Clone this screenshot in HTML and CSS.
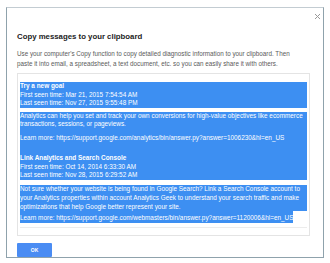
FILE: index.html
```html
<!DOCTYPE html>
<html lang="en">
<head>
    <meta charset="UTF-8">
    <title>Copy messages to your clipboard</title>
    <link rel="stylesheet" href="styles.css">
</head>
<body>
    <div class="dialog">
        <div class="close-row">
            <svg class="close" width="7" height="7" viewBox="0 0 7 7">
                <path d="M1 1 L6 6 M6 1 L1 6" stroke="#9a9a9a" stroke-width="1" fill="none"/>
            </svg>
        </div>
        <h1>Copy messages to your clipboard</h1>
        <p class="desc">Use your computer's Copy function to copy detailed diagnostic information to your clipboard. Then paste it into email, a spreadsheet, a text document, etc. so you can easily share it with others.</p>

        <div class="messages">
            <div class="sel block-1">
                <strong>Try a new goal</strong><br>
                First seen time: Mar 21, 2015 7:54:54 AM<br>
                Last seen time: Nov 27, 2015 9:55:48 PM
            </div>
            <div class="sel block-2">
                <div>Analytics can help you set and track your own conversions for high-value objectives like ecommerce transactions, sessions, or pageviews.</div>
                <div class="learn">Learn more: https://support.google.com/analytics/bin/answer.py?answer=1006230&amp;hl=en_US</div>
                <div class="next-head">
                    <strong>Link Analytics and Search Console</strong><br>
                    First seen time: Oct 14, 2014 6:33:30 AM<br>
                    Last seen time: Nov 28, 2015 6:29:52 AM
                </div>
            </div>
            <div class="sel block-3">Not sure whether your website is being found in Google Search? Link a Search Console account to your Analytics properties within account Analytics Geek to understand your search traffic and make optimizations that help Google better represent your site.</div>
            <div class="last-line"><span class="sel-inline">Learn more: https://support.google.com/webmasters/bin/answer.py?answer=1120006&amp;hl=en_US</span></div>
            <div class="rule"></div>
        </div>

        <button class="ok">OK</button>
    </div>
</body>
</html>
```

FILE: styles.css
```css
body { margin: 0; background: #fff; font-family: "Liberation Sans", Arial, sans-serif; }
.dialog { box-sizing: border-box; width: 318px; height: 251px; margin: 7px 0 0 6px; padding: 0 0 0 10px; border: 1px solid #8fa2ac; border-top-color: #c3ccd2; background: #fff; }
.close-row { display: flex; justify-content: flex-end; padding: 5px 2px 0 0; height: 8px; }
.close { display: block; }
h1 { margin: 11px 0 0; font-size: 7.8px; line-height: 10px; color: #222; font-weight: bold; }
.desc { margin: 7px 0 0; width: 280px; font-size: 6.3px; line-height: 10px; color: #5a5a5a; }
.messages { box-sizing: border-box; width: 293px; margin-top: 4px; padding: 8px 2px 7px; border: 1px solid #e4e4e4; font-size: 6.4px; line-height: 8.6px; color: #fff; }
.sel { background: #3d8ff2; }
.sel strong { font-weight: bold; }
.block-2 { margin-top: 4px; }
.learn { margin-top: 5px; }
.next-head { margin-top: 11.5px; }
.block-3 { margin-top: 5.5px; }
.last-line { line-height: 8.6px; }
.sel-inline { display: inline-block; background: #3d8ff2; padding-top: 3px; }
.rule { margin-top: 4px; border-bottom: 1px solid #ececec; }
.ok { display: block; margin-top: 7px; width: 35px; height: 14px; padding: 0; border: none; border-radius: 1px; background: #4a8cf3; color: #fff; font-family: "Liberation Sans", Arial, sans-serif; font-size: 5px; font-weight: bold; }
```
